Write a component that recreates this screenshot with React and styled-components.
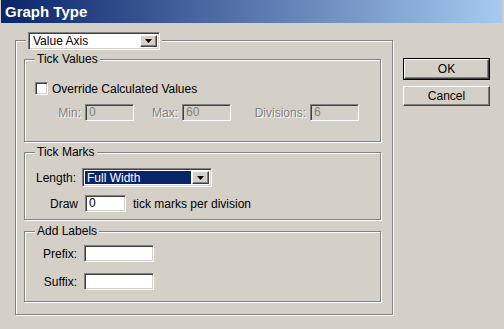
import React from "react";
import styled, { createGlobalStyle, css } from "styled-components";

const GlobalStyle = createGlobalStyle`
  html, body {
    margin: 0;
    padding: 0;
    background: #d4d0c8;
  }
  body {
    font-family: "Liberation Sans", Arial, sans-serif;
    font-size: 12px;
    color: #000;
  }
  * {
    box-sizing: border-box;
  }
`;

const sunken = css`
  border: 1px solid;
  border-color: #808080 #ffffff #ffffff #808080;
  box-shadow: inset 1px 1px 0 #404040, inset -1px -1px 0 #d4d0c8;
`;

const raised = css`
  border: 1px solid;
  border-color: #ffffff #404040 #404040 #ffffff;
  box-shadow: inset -1px -1px 0 #808080, inset 1px 1px 0 #d4d0c8;
`;

const Window = styled.div`
  width: 504px;
  height: 329px;
  background: #d4d0c8;
  padding: 0 2px 0 1px;
  display: flex;
  flex-direction: column;
  overflow: hidden;
`;

const TitleBar = styled.div`
  height: 23px;
  background: linear-gradient(to right, #0a246a, #a6caf0);
  color: #fff;
  font-weight: bold;
  font-size: 15px;
  padding-left: 4px;
  display: flex;
  align-items: center;
`;

const Body = styled.div`
  display: flex;
  padding: 17px 0 0 14px;
`;

const Group = styled.div`
  position: relative;
  border: 1px solid #808080;
  box-shadow: inset 1px 1px 0 #fff, 1px 1px 0 #fff;
`;

const OuterGroup = styled(Group)`
  width: 378px;
  height: 275px;
  padding: 18px 11px 12px 8px;
  display: flex;
  flex-direction: column;
`;

const InnerGroup = styled(Group)`
  width: 357px;
  height: ${(p) => p.$h}px;
  padding-top: ${(p) => p.$pt}px;
  margin-top: ${(p) => p.$mt || 0}px;
  display: flex;
  flex-direction: column;
`;

const Caption = styled.div`
  position: absolute;
  top: ${(p) => p.$top}px;
  left: 10px;
  padding: 0 2px;
  background: #d4d0c8;
  line-height: 14px;
`;

const Row = styled.div`
  display: flex;
  align-items: center;
  height: ${(p) => p.$h || 17}px;
  margin-top: ${(p) => p.$mt || 0}px;
  padding-left: ${(p) => p.$pl || 0}px;
`;

const Label = styled.span`
  width: ${(p) => p.$w}px;
  margin-right: ${(p) => p.$gap ?? 4}px;
  text-align: right;
  white-space: nowrap;
  ${(p) =>
    p.$disabled &&
    css`
      color: #808080;
      text-shadow: 1px 1px 0 #fff;
    `}
`;

const Text = styled.span`
  white-space: nowrap;
  margin-left: ${(p) => p.$ml || 0}px;
`;

const TextBox = styled.div`
  ${sunken};
  width: ${(p) => p.$w}px;
  height: 17px;
  background: ${(p) => (p.$disabled ? "#d4d0c8" : "#fff")};
  color: ${(p) => (p.$disabled ? "#808080" : "#000")};
  padding: 0 3px;
  line-height: 15px;
  flex-shrink: 0;
`;

const CheckBox = styled.div`
  ${sunken};
  width: 13px;
  height: 13px;
  background: #fff;
  margin-right: 4px;
  flex-shrink: 0;
`;

const Select = styled.div`
  ${sunken};
  width: ${(p) => p.$w}px;
  height: ${(p) => p.$h}px;
  background: #fff;
  display: flex;
  padding: 2px;
  flex-shrink: 0;
`;

const SelectValue = styled.div`
  flex: 1;
  display: flex;
  align-items: center;
  padding-left: 2px;
  margin-right: 1px;
  ${(p) =>
    p.$selected &&
    css`
      background: #0a246a;
      color: #fff;
    `}
`;

const SelectButton = styled.div`
  ${raised};
  width: ${(p) => p.$w || 17}px;
  background: #d4d0c8;
  display: flex;
  align-items: center;
  justify-content: center;
`;

const RightColumn = styled.div`
  display: flex;
  flex-direction: column;
  gap: 6px;
  margin-left: 10px;
  padding-top: 18px;
`;

const Button = styled.div`
  width: 87px;
  height: ${(p) => (p.$default ? 22 : 20)}px;
  background: #d4d0c8;
  display: flex;
  align-items: center;
  justify-content: center;
  ${(p) =>
    p.$default
      ? css`
          border: 1px solid #000;
          & > span {
            ${raised};
            width: 100%;
            height: 100%;
            display: flex;
            align-items: center;
            justify-content: center;
          }
        `
      : css`
          ${raised};
        `}
`;

const Arrow = () => (
  <svg width="7" height="4" viewBox="0 0 7 4">
    <path d="M0 0h7L3.5 4z" fill="#000" />
  </svg>
);

const Dropdown = ({ w, h, value, selected }) => (
  <Select $w={w} $h={h}>
    <SelectValue $selected={selected}>{value}</SelectValue>
    <SelectButton>
      <Arrow />
    </SelectButton>
  </Select>
);

export default function App() {
  return (
    <>
      <GlobalStyle />
      <Window>
        <TitleBar>Graph Type</TitleBar>
        <Body>
          <OuterGroup>
            <Caption $top={-9}>
              <Dropdown w={132} h={18} value="Value Axis" />
            </Caption>

            <InnerGroup $h={83} $pt={20}>
              <Caption $top={-8}>Tick Values</Caption>
              <Row $pl={10}>
                <CheckBox />
                <Text>Override Calculated Values</Text>
              </Row>
              <Row $mt={7} $pl={30}>
                <Label $w={26} $disabled>Min:</Label>
                <TextBox $w={49} $disabled>0</TextBox>
                <Label $w={44} $disabled>Max:</Label>
                <TextBox $w={49} $disabled>60</TextBox>
                <Label $w={75} $disabled>Divisions:</Label>
                <TextBox $w={49} $disabled>6</TextBox>
              </Row>
            </InnerGroup>

            <InnerGroup $h={68} $pt={15} $mt={10}>
              <Caption $top={-8}>Tick Marks</Caption>
              <Row $h={19}>
                <Label $w={51} $gap={6}>Length:</Label>
                <Dropdown w={130} h={19} value="Full Width" selected />
              </Row>
              <Row $mt={8}>
                <Label $w={53} $gap={7}>Draw</Label>
                <TextBox $w={41}>0</TextBox>
                <Text $ml={7}>tick marks per division</Text>
              </Row>
            </InnerGroup>

            <InnerGroup $h={71} $pt={13} $mt={11}>
              <Caption $top={-8}>Add Labels</Caption>
              <Row>
                <Label $w={52} $gap={7}>Prefix:</Label>
                <TextBox $w={70} />
              </Row>
              <Row $mt={11}>
                <Label $w={52} $gap={7}>Suffix:</Label>
                <TextBox $w={70} />
              </Row>
            </InnerGroup>
          </OuterGroup>

          <RightColumn>
            <Button $default>
              <span>OK</span>
            </Button>
            <Button>Cancel</Button>
          </RightColumn>
        </Body>
      </Window>
    </>
  );
}
